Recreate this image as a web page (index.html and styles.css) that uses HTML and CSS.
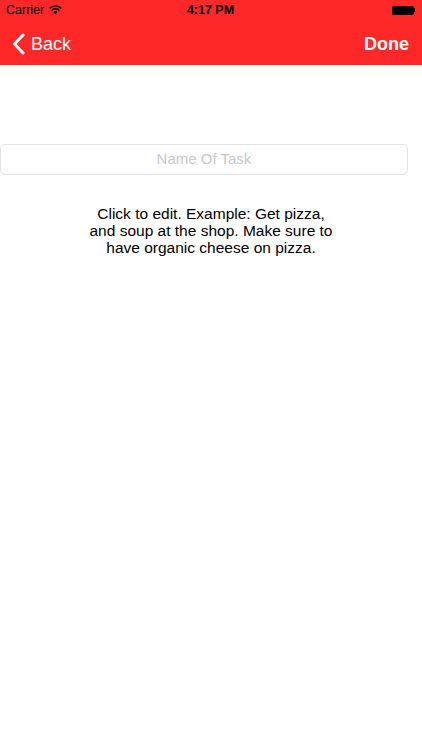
FILE: index.html
```html
<!DOCTYPE html>
<html lang="en">
<head>
    <meta charset="UTF-8">
    <meta name="viewport" content="width=device-width, initial-scale=1.0">
    <title>New Task</title>
    <link rel="stylesheet" href="styles.css">
</head>
<body>
    <header class="topbar">
        <div class="status-bar">
            <div class="carrier">
                Carrier
                <svg class="wifi" width="13" height="10" viewBox="0 0 13 10">
                    <path d="M6.5 9.5 L4.3 7.1 A3.2 3.2 0 0 1 8.7 7.1 Z" fill="#000"/>
                    <path d="M2.6 5.4 A5.6 5.6 0 0 1 10.4 5.4" stroke="#000" stroke-width="1.6" fill="none"/>
                    <path d="M0.6 3.3 A8.6 8.6 0 0 1 12.4 3.3" stroke="#000" stroke-width="1.6" fill="none"/>
                </svg>
            </div>
            <div class="clock">4:17 PM</div>
            <div class="battery">
                <span class="battery-body"></span><span class="battery-tip"></span>
            </div>
        </div>
        <nav class="nav-bar">
            <a class="nav-back" href="#">
                <svg width="13" height="22" viewBox="0 0 13 22">
                    <path d="M11 2 L2.5 11 L11 20" stroke="#fff" stroke-width="3" fill="none" stroke-linecap="round" stroke-linejoin="round"/>
                </svg>
                <span>Back</span>
            </a>
            <a class="nav-done" href="#">Done</a>
        </nav>
    </header>

    <main class="content">
        <input class="task-name" type="text" placeholder="Name Of Task">
        <p class="task-note">Click to edit. Example: Get pizza, and soup at the shop. Make sure to have organic cheese on pizza.</p>
    </main>
</body>
</html>
```

FILE: styles.css
```css
body {
    margin: 0;
    font-family: "Liberation Sans", Arial, sans-serif;
    background: #fff;
    width: 422px;
}
.topbar {
    background-color: #ff2828;
    height: 65px;
}
.status-bar {
    height: 20px;
    display: flex;
    align-items: center;
    justify-content: space-between;
    padding: 0 6px;
    font-size: 12.5px;
    color: #000;
}
.carrier {
    display: flex;
    align-items: center;
    gap: 5px;
    width: 100px;
}
.clock {
    font-weight: bold;
}
.battery {
    width: 100px;
    display: flex;
    justify-content: flex-end;
    align-items: center;
    padding-right: 1px;
}
.battery-body {
    width: 22px;
    height: 9px;
    background: #000;
    border-radius: 2px;
}
.battery-tip {
    width: 1.5px;
    height: 4px;
    background: #000;
}
.nav-bar {
    height: 45px;
    box-sizing: border-box;
    padding: 3px 13px 0 12px;
    display: flex;
    align-items: center;
    justify-content: space-between;
}
.nav-bar a {
    color: #fff;
    text-decoration: none;
    font-size: 18px;
}
.nav-back {
    display: flex;
    align-items: center;
    gap: 6px;
}
.nav-done {
    font-weight: bold;
    font-size: 17px;
}
.content {
    padding-top: 79px;
}
.task-name {
    display: block;
    box-sizing: border-box;
    width: 408px;
    height: 31px;
    margin: 0;
    padding: 0 0 3px;
    border: 1px solid #e3e3e3;
    border-radius: 5px;
    font-family: inherit;
    font-size: 15px;
    text-align: center;
    outline: none;
}
.task-name::placeholder {
    color: #c7c7cd;
}
.task-note {
    width: 250px;
    margin: 30px auto 0;
    font-size: 15.5px;
    line-height: 17px;
    text-align: center;
    color: #000;
}
```
